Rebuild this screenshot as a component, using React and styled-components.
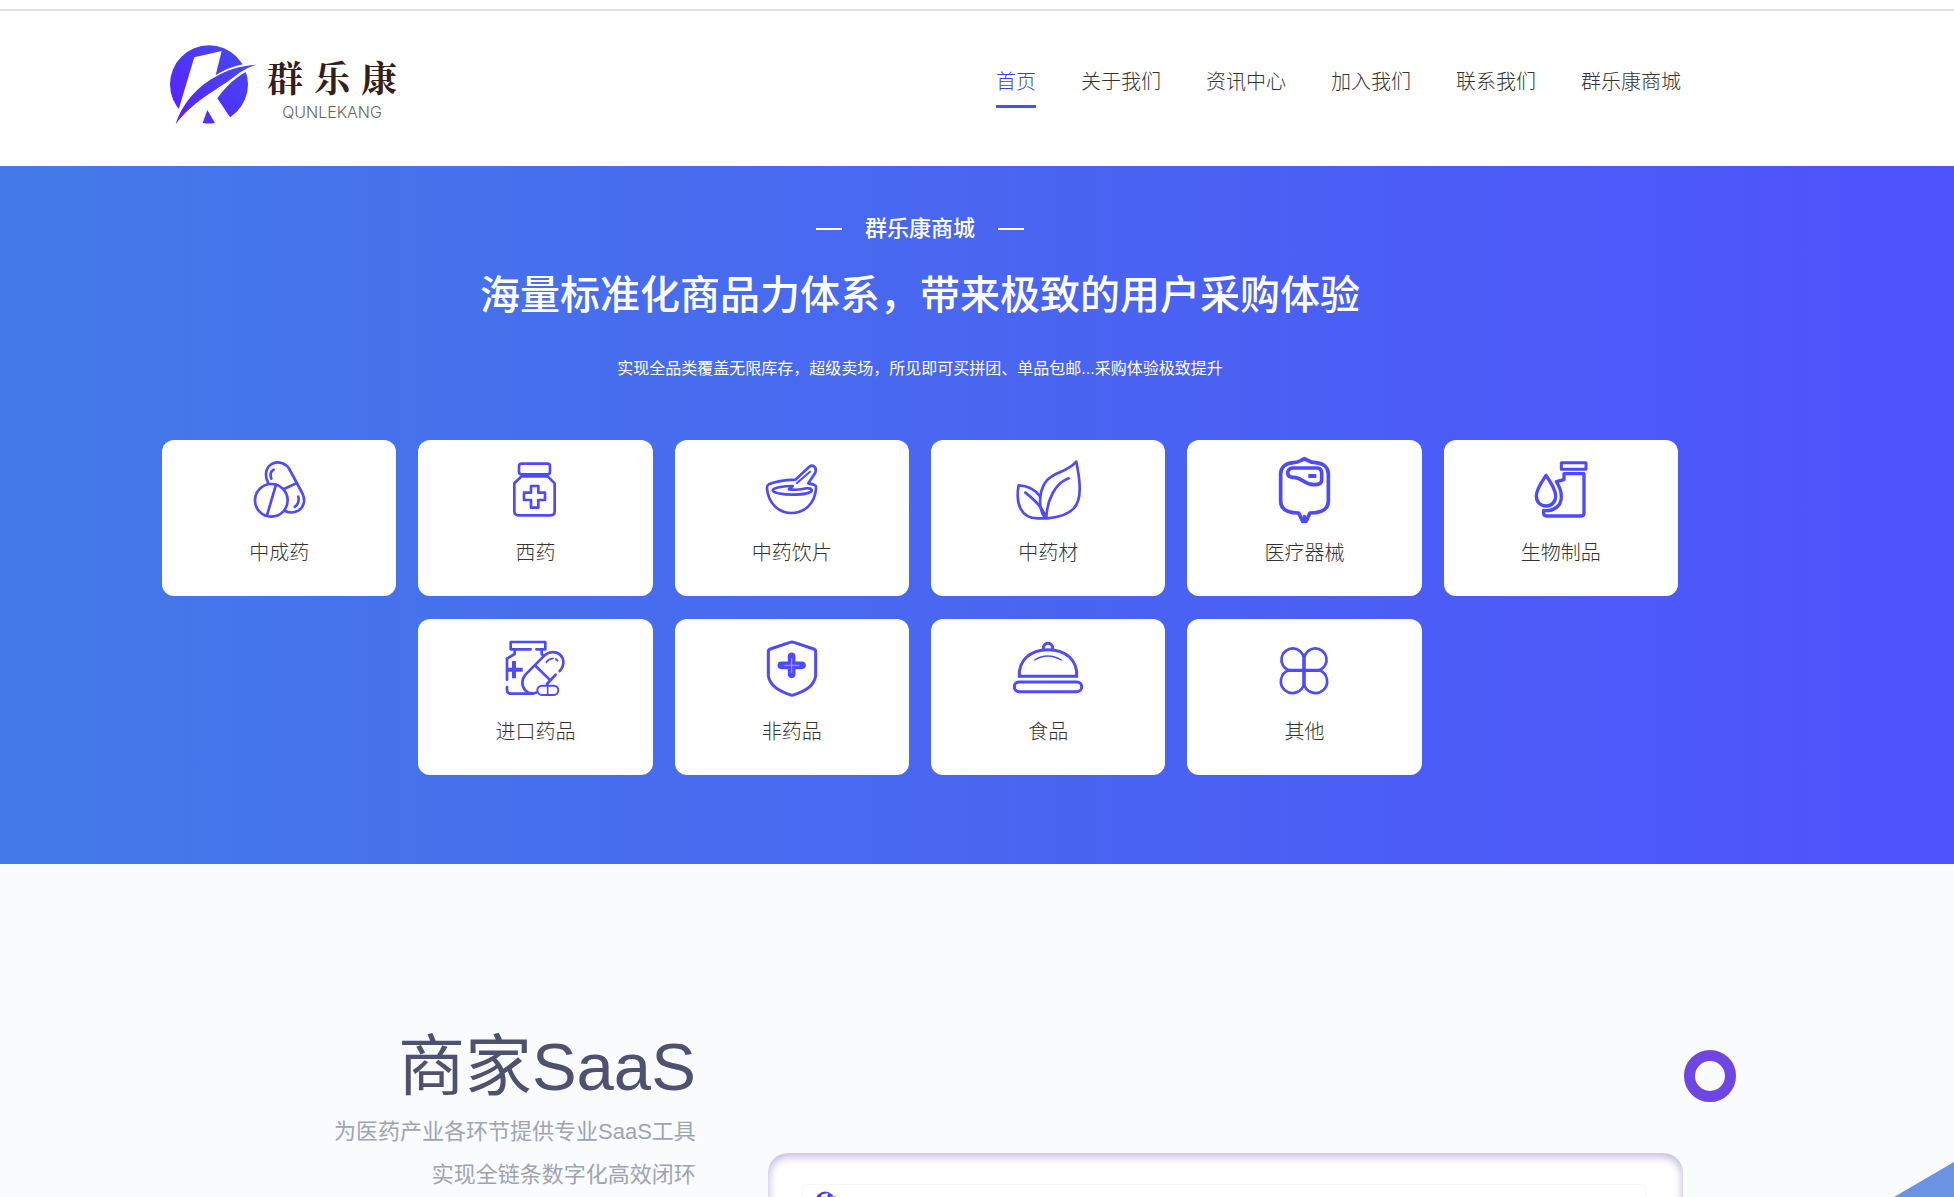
import React from 'react';
import styled, { createGlobalStyle } from 'styled-components';

const GlobalStyle = createGlobalStyle`
    * {
        box-sizing: border-box;
    }

    body {
        margin: 0;
        background-color: #fff;
        font-family: "Liberation Sans", "Noto Sans CJK SC", sans-serif;
    }
`;

// styled-components
const Page = styled.div`
    height: 100vh;
    display: flex;
    flex-direction: column;
    overflow: hidden;
`;

const TopRule = styled.div`
    flex-shrink: 0;
    margin-top: 9px;
    height: 2px;
    background-color: #e0e0e0;
`;

const Header = styled.header`
    flex-shrink: 0;
    display: flex;
    justify-content: space-between;
    align-items: flex-start;
    height: 155px;
    padding: 32px 273px 0 168px;
`;

const LogoLink = styled.a`
    display: flex;
    text-decoration: none;
`;

const LogoText = styled.div`
    display: flex;
    flex-direction: column;
    align-items: center;
    margin: 13px 0 0 10px;
`;

const LogoName = styled.div`
    display: flex;
    gap: 11px;
    font-family: "Noto Serif CJK SC", "Noto Sans CJK SC", serif;
    font-size: 36px;
    font-weight: 700;
    line-height: 42px;
    color: #33201a;
`;

const LogoLatin = styled.div`
    margin-top: 4px;
    font-family: Inter, sans-serif;
    font-size: 16px;
    font-weight: 300;
    line-height: 20px;
    color: #6e6460;
`;

const Nav = styled.nav`
    display: flex;
    gap: 45px;
    padding-top: 25px;
`;

const NavLink = styled.a`
    height: 40px;
    font-size: 20px;
    font-weight: 300;
    line-height: 28px;
    text-decoration: none;
    color: ${props => (props.$active ? '#3c3cff' : '#333')};
    border-bottom: 3px solid ${props => (props.$active ? '#4d4dff' : 'transparent')};
`;

const Hero = styled.section`
    flex-shrink: 0;
    height: 698px;
    padding: 46px 276px 0 162px;
    text-align: center;
    color: #fff;
    background: linear-gradient(90deg, #437ae8 0%, #4966f1 50%, #4e52fc 100%);
`;

const HeroKicker = styled.div`
    display: flex;
    justify-content: center;
    align-items: center;
    gap: 23px;
    font-size: 22px;
    font-weight: 500;
    line-height: 34px;
`;

const Dash = styled.span`
    width: 26px;
    height: 2px;
    background-color: #fff;
`;

const HeroTitle = styled.h1`
    margin: 19px 0 0;
    font-size: 40px;
    font-weight: 500;
    line-height: 60px;
`;

const HeroText = styled.p`
    margin: 32px 0 0;
    font-size: 16px;
    line-height: 24px;
`;

const CardGrid = styled.div`
    display: grid;
    grid-template-columns: repeat(6, 1fr);
    gap: 23px 22px;
    margin-top: 59px;
`;

const Card = styled.a`
    grid-column-start: ${props => props.$column || 'auto'};
    display: flex;
    flex-direction: column;
    align-items: center;
    height: 156px;
    padding-top: 12px;
    border-radius: 12px;
    background-color: #fff;
    text-decoration: none;
`;

const CardIcon = styled.svg`
    width: 72px;
    height: 72px;
    fill: none;
    stroke: #4d4aff;
    stroke-width: 8;
    stroke-linejoin: round;
    stroke-linecap: round;
`;

const CardLabel = styled.span`
    margin-top: 15px;
    font-size: 20px;
    font-weight: 300;
    line-height: 28px;
    color: #333;
`;

const Saas = styled.section`
    position: relative;
    flex: 1;
    min-height: 0;
    overflow: hidden;
    display: grid;
    grid-template-columns: 7fr 12fr;
    column-gap: 72px;
    padding: 0 271px 0 162px;
    background-color: #f9fbfd;
`;

const SaasCopy = styled.div`
    padding-top: 160px;
    text-align: right;
`;

const SaasTitle = styled.h2`
    margin: 0;
    font-size: 67px;
    font-weight: 400;
    line-height: 86px;
    color: #50506f;
`;

const SaasText = styled.p`
    margin: 0;
    font-size: 22px;
    line-height: 43px;
    color: #a0a4b0;
`;

const Preview = styled.div`
    height: 540px;
    margin-top: 289px;
    padding: 32px 38px 0 35px;
    border-radius: 20px;
    background-color: #fff;
    box-shadow: inset 0 3px 8px 1px #c3bbdc;
`;

const PreviewScreen = styled.div`
    height: 480px;
    padding: 6px 12px;
    border-radius: 4px;
    box-shadow: 0 0 3px #ececf6;
`;

const Ring = styled.div`
    position: absolute;
    top: 186px;
    right: 218px;
    width: 52px;
    height: 52px;
    border: 11px solid #6f46e2;
    border-radius: 50%;
`;

const Wedge = styled.svg`
    position: absolute;
    right: 0;
    bottom: 0;
    width: 60px;
    height: 35px;
`;

const icons = {
    pills: (
        <CardIcon viewBox="279 66 216 216" aria-hidden="true">
            <circle cx="364" cy="211" r="49" />
            <path d="M378 164 L351 256" />
            <path d="M354 158 C342 133 349 110 367 101 C388 92 408 101 418 117 L458 192 C467 212 461 232 445 242 C432 249 418 249 405 243" />
            <path d="M402 177 L438 160" />
            <path d="M371 119 C362 124 360 135 364 146 M445 200 C448 214 444 224 434 231" />
        </CardIcon>
    ),
    bottle: (
        <CardIcon viewBox="1050 66 216 216" aria-hidden="true">
            <rect x="1110" y="101" width="93" height="32" rx="8" />
            <path d="M1118 139 H1196 L1217 160 V244 Q1217 256 1205 256 H1108 Q1096 256 1096 244 V160 Z" />
            <path d="M1146 168 H1168 V188 H1188 V210 H1168 V233 H1146 V210 H1125 V188 H1146 Z" />
        </CardIcon>
    ),
    mortar: (
        <CardIcon viewBox="288 66 216 216" aria-hidden="true">
            <path d="M406 149 C372 150 342 156 326 163 C320 166 321 171 321 176 C325 220 356 249 394 249 C434 249 465 220 468 176 C468 168 469 168 461 164 L445 160 L466 128 C471 111 458 102 448 110 Z" />
            <path d="M450 125 L411 159" strokeWidth="6" />
            <path d="M398 168 C370 168 338 174 338 181 C340 189 370 194 396 194 C426 194 452 189 455 182 C456 176 445 174 439 175 C422 180 403 180 387 178 Z" />
        </CardIcon>
    ),
    leaf: (
        <CardIcon viewBox="1056 66 216 216" aria-hidden="true">
            <path d="M1156 265 C1132 236 1134 164 1175 139 C1197 123 1222 125 1249 95 C1253 120 1259 141 1259 174 C1260 225 1241 258 1163 265 H1133 C1081 265 1066 219 1076 166 C1100 167 1124 177 1140 199" />
            <path d="M1159 263 C1161 210 1185 160 1226 145 M1096 188 C1123 209 1153 235 1156 263" />
        </CardIcon>
    ),
    infusion: (
        <CardIcon viewBox="294 66 216 216" aria-hidden="true">
            <g strokeWidth="11">
                <path d="M403 86 C390 91 389 98 369 98 C346 100 332 112 332 132 V212 C332 237 350 249 386 249 L398 274 H408 L420 249 C458 249 475 237 475 212 V132 C475 112 460 100 438 98 C417 98 416 91 403 86 Z" />
                <path d="M366 114 H443 Q455 116 455 130 V150 Q455 165 431 164 C400 163 397 142 371 142 C348 143 348 118 366 114 Z" />
                <path d="M415 138 H439" strokeLinecap="butt" strokeWidth="12" />
                <path d="M403 260 V270" />
            </g>
        </CardIcon>
    ),
    vial: (
        <CardIcon viewBox="1065 66 216 216" aria-hidden="true">
            <g strokeWidth="10">
                <rect x="1174" y="98" width="74" height="20" strokeWidth="9" />
                <path d="M1128 136 C1116 155 1099 177 1099 198 C1099 217 1112 228 1128 228 C1145 228 1157 216 1157 198 C1157 177 1141 155 1128 136 Z" />
                <path d="M1182 131 H1242 V249 Q1242 258 1234 258 H1129 Q1121 258 1121 250 V241 C1153 246 1174 226 1174 200 C1174 181 1168 169 1159 155 L1182 149 Z" />
            </g>
        </CardIcon>
    ),
    imported: (
        <CardIcon viewBox="270 63 216 216" aria-hidden="true">
            <path d="M365 118 H305 V96 H409 V118 H382 M317 118 V132 L294 146 V209 M398 118 V132 L404 138 M294 231 V241 Q294 251 306 251 H372" />
            <path d="M294 179 H341 M315 153 V205" strokeWidth="12" strokeLinecap="butt" />
            <path d="M452 183 C469 165 464 144 454 135 C441 123 419 124 406 137 L350 193 C337 208 337 229 349 241 C357 250 371 251 381 248 M380 168 L421 208 M440 194 L414 222" />
            <path d="M412 157 Q420 146 432 145 M440 147 L446 152" strokeWidth="5" />
            <rect x="385" y="227" width="63" height="28" rx="14" strokeWidth="6" />
            <path d="M416 227 V255" strokeWidth="5" />
        </CardIcon>
    ),
    shield: (
        <CardIcon viewBox="1038 63 216 216" aria-hidden="true">
            <path d="M1140 97 Q1146 95 1152 97 L1211 117 Q1217 119 1217 125 V198 C1212 224 1194 241 1146 256 C1100 241 1080 224 1075 198 V125 Q1075 119 1081 117 Z" strokeWidth="9" />
            <path d="M1145 139 V193 M1114 166 H1176" strokeWidth="23" />
            <path d="M1145 146 V188 M1124 166 H1167" strokeWidth="3" stroke="#a9a8ff" />
        </CardIcon>
    ),
    dish: (
        <CardIcon viewBox="276 63 216 216" aria-hidden="true">
            <path d="M298 199 C295 153 329 119 384 119 C440 119 473 153 470 199 Z" strokeWidth="9" strokeLinejoin="miter" />
            <path d="M370 117 C368 94 400 94 398 117" strokeWidth="9" />
            <path d="M344 150 Q382 126 424 150" strokeWidth="4" />
            <rect x="283" y="216" width="202" height="29" rx="14" strokeWidth="9" />
        </CardIcon>
    ),
    clover: (
        <CardIcon viewBox="1044 63 216 216" aria-hidden="true">
            <path d="M1152 181 V145 A34 34 0 1 0 1106 181 A35 35 0 1 0 1152 221 V181 M1152 145 A34 34 0 1 1 1198 181 A35 35 0 1 1 1152 221" />
            <path d="M1106 181 H1198 M1152 145 V221" strokeWidth="10" />
        </CardIcon>
    ),
};

const navItems = ['首页', '关于我们', '资讯中心', '加入我们', '联系我们', '群乐康商城'];

const categories = [
    { icon: 'pills', label: '中成药' },
    { icon: 'bottle', label: '西药' },
    { icon: 'mortar', label: '中药饮片' },
    { icon: 'leaf', label: '中药材' },
    { icon: 'infusion', label: '医疗器械' },
    { icon: 'vial', label: '生物制品' },
    // second row starts one column in
    { icon: 'imported', label: '进口药品', column: 2 },
    { icon: 'shield', label: '非药品' },
    { icon: 'dish', label: '食品' },
    { icon: 'clover', label: '其他' },
];

const LogoMark = ({ id, width, height }) => (
    <svg width={width} height={height} viewBox="54 129 267 249" aria-hidden="true">
        <defs>
            <linearGradient id={id} x1="0" y1="1" x2="1" y2="0">
                <stop offset="0" stopColor="#5a1cff" />
                <stop offset="1" stopColor="#444df0" />
            </linearGradient>
        </defs>
        <circle cx="177" cy="253" r="117" fill={`url(#${id})`} />
        <path
            d="M133 172 L215 153 L197 226 C225 207 262 194 300 190 L322 203 C280 214 240 242 202 295 L241 353 L245 380 L60 380 L87 325 Z"
            fill="#fff"
        />
        <path
            d="M77 373 C94 315 140 262 190 234 C230 209 270 198 319 194 C285 206 264 220 247 235 C204 267 125 307 77 373 Z"
            fill={`url(#${id})`}
        />
        <path d="M172 330 L195 369 Q177 372 158 369 Z" fill="#5430fa" />
    </svg>
);

const App = () => {
    return (
        <Page>
            <GlobalStyle />
            <TopRule />
            <Header>
                <LogoLink href="#">
                    <LogoMark id="logo" width="89" height="83" />
                    <LogoText>
                        <LogoName>
                            <span>群</span>
                            <span>乐</span>
                            <span>康</span>
                        </LogoName>
                        <LogoLatin>QUNLEKANG</LogoLatin>
                    </LogoText>
                </LogoLink>
                <Nav>
                    {navItems.map((item, index) => (
                        <NavLink key={item} href="#" $active={index === 0}>
                            {item}
                        </NavLink>
                    ))}
                </Nav>
            </Header>
            <Hero>
                <HeroKicker>
                    <Dash />
                    群乐康商城
                    <Dash />
                </HeroKicker>
                <HeroTitle>海量标准化商品力体系，带来极致的用户采购体验</HeroTitle>
                <HeroText>
                    实现全品类覆盖无限库存，超级卖场，所见即可买拼团、单品包邮...采购体验极致提升
                </HeroText>
                <CardGrid>
                    {categories.map(category => (
                        <Card key={category.label} href="#" $column={category.column}>
                            {icons[category.icon]}
                            <CardLabel>{category.label}</CardLabel>
                        </Card>
                    ))}
                </CardGrid>
            </Hero>
            <Saas>
                <SaasCopy>
                    <SaasTitle>商家SaaS</SaasTitle>
                    <SaasText>为医药产业各环节提供专业SaaS工具</SaasText>
                    <SaasText>实现全链条数字化高效闭环</SaasText>
                </SaasCopy>
                <Preview>
                    <PreviewScreen>
                        <LogoMark id="preview-logo" width="22" height="20" />
                    </PreviewScreen>
                </Preview>
                <Ring />
                <Wedge viewBox="0 0 60 35" aria-hidden="true">
                    <path d="M0 35 L60 0 V35 Z" fill="#6b93e4" />
                </Wedge>
            </Saas>
        </Page>
    );
};

export default App;
